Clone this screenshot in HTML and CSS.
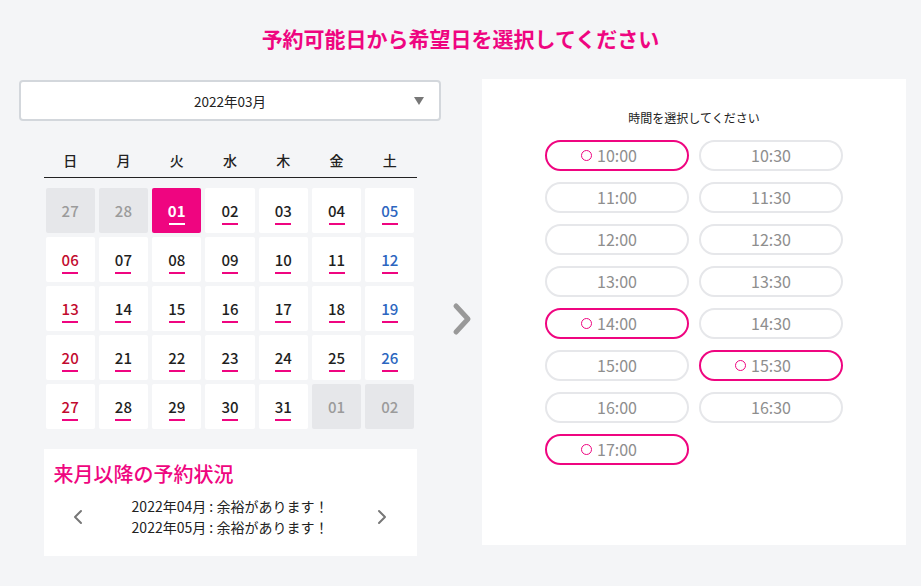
FILE: index.html
```html
<!DOCTYPE html>
<html lang="ja">
<head>
<meta charset="utf-8">
<title>予約</title>
<link rel="stylesheet" href="styles.css">
</head>
<body>
<h1 class="page-title">予約可能日から希望日を選択してください</h1>
<div class="main">
  <div class="left">
    <div class="select">
      <span class="select-text">2022年03月</span>
      <span class="select-caret"></span>
    </div>
    <div class="calendar">
      <div class="week">
        <span>日</span><span>月</span><span>火</span><span>水</span><span>木</span><span>金</span><span>土</span>
      </div>
      <div class="days">
        <div class="day off"><span class="n">27</span></div>
        <div class="day off"><span class="n">28</span></div>
        <div class="day sel"><span class="n">01</span></div>
        <div class="day"><span class="n">02</span></div>
        <div class="day"><span class="n">03</span></div>
        <div class="day"><span class="n">04</span></div>
        <div class="day sat"><span class="n">05</span></div>

        <div class="day sun"><span class="n">06</span></div>
        <div class="day"><span class="n">07</span></div>
        <div class="day"><span class="n">08</span></div>
        <div class="day"><span class="n">09</span></div>
        <div class="day"><span class="n">10</span></div>
        <div class="day"><span class="n">11</span></div>
        <div class="day sat"><span class="n">12</span></div>

        <div class="day sun"><span class="n">13</span></div>
        <div class="day"><span class="n">14</span></div>
        <div class="day"><span class="n">15</span></div>
        <div class="day"><span class="n">16</span></div>
        <div class="day"><span class="n">17</span></div>
        <div class="day"><span class="n">18</span></div>
        <div class="day sat"><span class="n">19</span></div>

        <div class="day sun"><span class="n">20</span></div>
        <div class="day"><span class="n">21</span></div>
        <div class="day"><span class="n">22</span></div>
        <div class="day"><span class="n">23</span></div>
        <div class="day"><span class="n">24</span></div>
        <div class="day"><span class="n">25</span></div>
        <div class="day sat"><span class="n">26</span></div>

        <div class="day sun"><span class="n">27</span></div>
        <div class="day"><span class="n">28</span></div>
        <div class="day"><span class="n">29</span></div>
        <div class="day"><span class="n">30</span></div>
        <div class="day"><span class="n">31</span></div>
        <div class="day off"><span class="n">01</span></div>
        <div class="day off"><span class="n">02</span></div>
      </div>
    </div>
    <div class="next">
      <div class="next-title">来月以降の予約状況</div>
      <div class="next-body">
        <svg class="chev" width="10" height="16" viewBox="0 0 10 16"><polyline points="8,2 2,8 8,14" fill="none" stroke="#777" stroke-width="2" stroke-linecap="round" stroke-linejoin="round"/></svg>
        <div class="next-lines">
          <div>2022年04月 : 余裕があります！</div>
          <div>2022年05月 : 余裕があります！</div>
        </div>
        <svg class="chev" width="10" height="16" viewBox="0 0 10 16"><polyline points="2,2 8,8 2,14" fill="none" stroke="#777" stroke-width="2" stroke-linecap="round" stroke-linejoin="round"/></svg>
      </div>
    </div>
  </div>
  <div class="arrow-col">
    <svg width="20" height="34" viewBox="0 0 20 34"><polyline points="4,4 16,17 4,30" fill="none" stroke="#999" stroke-width="5" stroke-linecap="round" stroke-linejoin="round"/></svg>
  </div>
  <div class="right">
    <div class="time-title">時間を選択してください</div>
    <div class="times">
      <div class="slot on"><span class="dot"></span>10:00</div>
      <div class="slot">10:30</div>
      <div class="slot">11:00</div>
      <div class="slot">11:30</div>
      <div class="slot">12:00</div>
      <div class="slot">12:30</div>
      <div class="slot">13:00</div>
      <div class="slot">13:30</div>
      <div class="slot on"><span class="dot"></span>14:00</div>
      <div class="slot">14:30</div>
      <div class="slot">15:00</div>
      <div class="slot on"><span class="dot"></span>15:30</div>
      <div class="slot">16:00</div>
      <div class="slot">16:30</div>
      <div class="slot on"><span class="dot"></span>17:00</div>
    </div>
  </div>
</div>
</body>
</html>
```

FILE: styles.css
```css
* { box-sizing: border-box; }
html, body {
  margin: 0;
  padding: 0;
  background: #f4f5f7;
  font-family: "Noto Sans CJK JP", "Noto Sans", sans-serif;
  color: #222;
}
.page-title {
  margin: 0;
  padding-top: 25px;
  font-size: 21px;
  line-height: 26px;
  font-weight: 700;
  color: #ef0580;
  text-align: center;
}
.main {
  display: flex;
  align-items: stretch;
  margin-top: 28px;
  padding-left: 19px;
}
.left {
  width: 422px;
  padding-top: 1px;
}
.select {
  position: relative;
  height: 41px;
  background: #fff;
  border: 2px solid #d3d7dc;
  border-radius: 4px;
  display: flex;
  align-items: center;
  justify-content: center;
  font-size: 13.5px;
  color: #222;
}
.select-caret {
  position: absolute;
  right: 15px;
  top: 15px;
  width: 0;
  height: 0;
  border-left: 5px solid transparent;
  border-right: 5px solid transparent;
  border-top: 8px solid #777;
}
.calendar {
  width: 373px;
  margin: 21px auto 0;
}
.week {
  display: grid;
  grid-template-columns: repeat(7, 1fr);
  column-gap: 4px;
  padding: 0 2px;
  height: 36px;
  line-height: 36px;
  border-bottom: 1px solid #222;
  font-size: 14px;
  font-weight: 500;
  text-align: center;
}
.days {
  display: grid;
  grid-template-columns: repeat(7, 1fr);
  grid-auto-rows: 45px;
  column-gap: 4px;
  row-gap: 4px;
  padding: 0 2px;
  margin-top: 10px;
}
.day {
  background: #fff;
  border-radius: 2px;
  display: flex;
  flex-direction: column;
  align-items: center;
  justify-content: flex-start;
  padding-top: 14px;
  font-size: 15px;
  font-weight: 500;
  color: #1f1f1f;
}
.day .n {
  line-height: 18px;
}
.day::after {
  content: "";
  display: block;
  width: 16px;
  height: 2px;
  margin-top: 3px;
  background: #ef0580;
}
.day.sun { color: #c20a2e; }
.day.sat { color: #2c66c0; }
.day.off {
  background: #e6e7ea;
  color: #9b9b9b;
}
.day.off::after { background: transparent; }
.day.sel {
  background: #ef0580;
  color: #fff;
  font-weight: 700;
}
.day.sel::after { background: #fff; }
.next {
  width: 373px;
  margin: 20px auto 0;
  background: #fff;
  padding: 11px 10px 18px;
}
.next-title {
  font-size: 20px;
  line-height: 28px;
  font-weight: 500;
  color: #ef0580;
}
.next-body {
  display: flex;
  align-items: center;
  justify-content: space-between;
  margin-top: 8px;
  padding: 0 19px 0 19px;
}
.next-lines {
  font-size: 14px;
  line-height: 21px;
  text-align: center;
  color: #222;
}
.chev { display: block; }
.arrow-col {
  width: 41px;
  display: flex;
  align-items: center;
  justify-content: center;
  padding-top: 2px;
}
.right {
  width: 424px;
  height: 466px;
  align-self: flex-start;
  background: #fff;
  padding-top: 30px;
}
.time-title {
  text-align: center;
  font-size: 12px;
  line-height: 18px;
  color: #222;
}
.times {
  display: grid;
  grid-template-columns: 144px 144px;
  grid-auto-rows: 31px;
  column-gap: 10px;
  row-gap: 11px;
  justify-content: center;
  margin-top: 13px;
}
.slot {
  border: 2px solid #e6e7ea;
  border-radius: 16px;
  display: flex;
  align-items: center;
  justify-content: center;
  font-size: 16px;
  color: #8e8e8e;
  line-height: 27px;
}
.slot.on {
  border-color: #ef0580;
}
.dot {
  width: 11px;
  height: 11px;
  border: 1.5px solid #ef0580;
  border-radius: 50%;
  margin-left: -16px;
  margin-right: 5px;
}
```
